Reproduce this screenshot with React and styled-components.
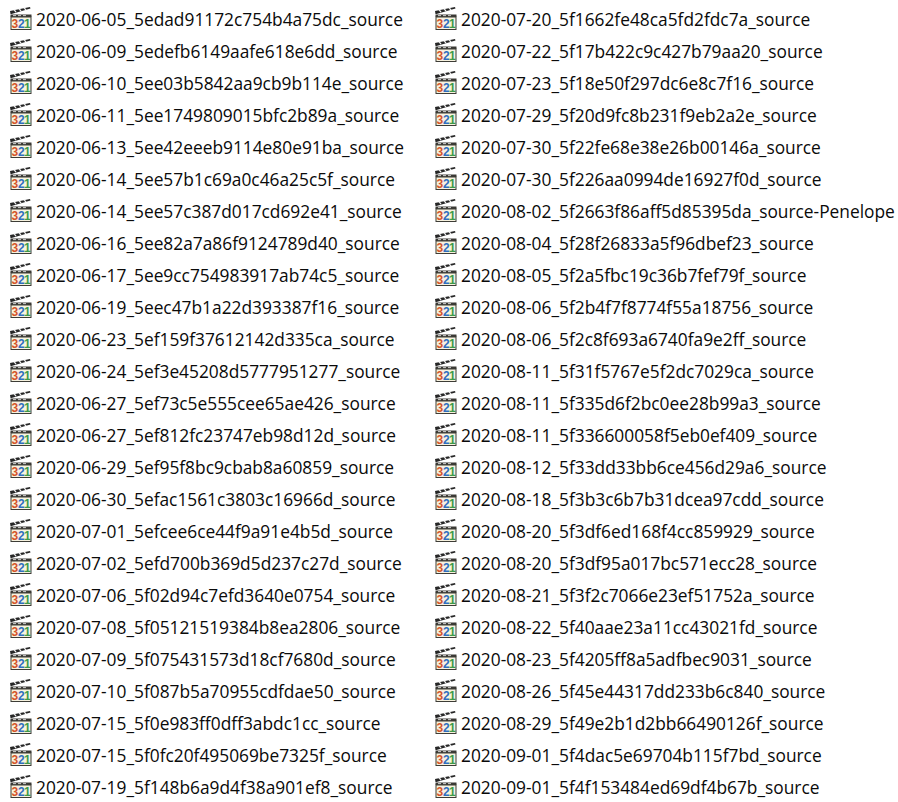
import React from 'react'
import styled, { createGlobalStyle } from 'styled-components'

const GlobalStyle = createGlobalStyle`
    html, body {
        margin:0;
        padding:0;
        background:#fff;
    }
`

const leftFiles = [
    '2020-06-05_5edad91172c754b4a75dc_source',
    '2020-06-09_5edefb6149aafe618e6dd_source',
    '2020-06-10_5ee03b5842aa9cb9b114e_source',
    '2020-06-11_5ee1749809015bfc2b89a_source',
    '2020-06-13_5ee42eeeb9114e80e91ba_source',
    '2020-06-14_5ee57b1c69a0c46a25c5f_source',
    '2020-06-14_5ee57c387d017cd692e41_source',
    '2020-06-16_5ee82a7a86f9124789d40_source',
    '2020-06-17_5ee9cc754983917ab74c5_source',
    '2020-06-19_5eec47b1a22d393387f16_source',
    '2020-06-23_5ef159f37612142d335ca_source',
    '2020-06-24_5ef3e45208d5777951277_source',
    '2020-06-27_5ef73c5e555cee65ae426_source',
    '2020-06-27_5ef812fc23747eb98d12d_source',
    '2020-06-29_5ef95f8bc9cbab8a60859_source',
    '2020-06-30_5efac1561c3803c16966d_source',
    '2020-07-01_5efcee6ce44f9a91e4b5d_source',
    '2020-07-02_5efd700b369d5d237c27d_source',
    '2020-07-06_5f02d94c7efd3640e0754_source',
    '2020-07-08_5f05121519384b8ea2806_source',
    '2020-07-09_5f075431573d18cf7680d_source',
    '2020-07-10_5f087b5a70955cdfdae50_source',
    '2020-07-15_5f0e983ff0dff3abdc1cc_source',
    '2020-07-15_5f0fc20f495069be7325f_source',
    '2020-07-19_5f148b6a9d4f38a901ef8_source',
]

const rightFiles = [
    '2020-07-20_5f1662fe48ca5fd2fdc7a_source',
    '2020-07-22_5f17b422c9c427b79aa20_source',
    '2020-07-23_5f18e50f297dc6e8c7f16_source',
    '2020-07-29_5f20d9fc8b231f9eb2a2e_source',
    '2020-07-30_5f22fe68e38e26b00146a_source',
    '2020-07-30_5f226aa0994de16927f0d_source',
    '2020-08-02_5f2663f86aff5d85395da_source-Penelope',
    '2020-08-04_5f28f26833a5f96dbef23_source',
    '2020-08-05_5f2a5fbc19c36b7fef79f_source',
    '2020-08-06_5f2b4f7f8774f55a18756_source',
    '2020-08-06_5f2c8f693a6740fa9e2ff_source',
    '2020-08-11_5f31f5767e5f2dc7029ca_source',
    '2020-08-11_5f335d6f2bc0ee28b99a3_source',
    '2020-08-11_5f336600058f5eb0ef409_source',
    '2020-08-12_5f33dd33bb6ce456d29a6_source',
    '2020-08-18_5f3b3c6b7b31dcea97cdd_source',
    '2020-08-20_5f3df6ed168f4cc859929_source',
    '2020-08-20_5f3df95a017bc571ecc28_source',
    '2020-08-21_5f3f2c7066e23ef51752a_source',
    '2020-08-22_5f40aae23a11cc43021fd_source',
    '2020-08-23_5f4205ff8a5adfbec9031_source',
    '2020-08-26_5f45e44317dd233b6c840_source',
    '2020-08-29_5f49e2b1d2bb66490126f_source',
    '2020-09-01_5f4dac5e69704b115f7bd_source',
    '2020-09-01_5f4f153484ed69df4b67b_source',
]

const Listing = styled.div`
    display:grid;
    grid-template-columns:425px 1fr;
    width:898px;
    height:802px;
    padding:3px 0 0 10px;
    box-sizing:border-box;
    overflow:hidden;
`
const Column = styled.div`
    display:flex;
    flex-direction:column;
`
const FileRow = styled.div`
    display:flex;
    align-items:center;
    gap:4px;
    height:32px;
    font-family:"Open Sans", sans-serif;
    font-size:17.33px;
    color:#0a0a0a;
    white-space:nowrap;
`
const IconSvg = styled.svg`
    flex:none;
`
const Digit = styled.text`
    font-family:"Liberation Sans", sans-serif;
    font-size:12px;
    font-weight:700;
    fill:${props => props.color};
`

const MediaIcon = () => (
    <IconSvg width="22" height="24" viewBox="0 0 22 24">
        <path d="M0 4 L20 0 L20.5 1.5 L1.5 7 L0.5 7 Z" fill="#262626" />
        <path d="M4 2.6 L6 5.2 M9 1.6 L11 4.2 M14 0.6 L16 3.2" stroke="#efefef" strokeWidth="1.3" />
        <path d="M0.5 7.5 H21.5 V10 H0.5 Z" fill="#3a3934" />
        <path d="M3 8.7 H6 M8 8.7 H11 M13 8.7 H16" stroke="#dcdcdc" strokeWidth="1" />
        <rect x="1" y="10" width="20" height="12.5" fill="#f7f2df" stroke="#3d3c36" />
        <Digit x="1.5" y="20.5" color="#d4552a">3</Digit>
        <Digit x="8" y="20.5" color="#2f6fc0">2</Digit>
        <Digit x="14" y="20.5" color="#3f9a4a">1</Digit>
    </IconSvg>
)

const FileColumn = ({ files }) => (
    <Column>
        {files.map(name => (
            <FileRow key={name}>
                <MediaIcon />
                {name}
            </FileRow>
        ))}
    </Column>
)

export default function App() {
    return (
        <>
            <GlobalStyle />
            <Listing>
                <FileColumn files={leftFiles} />
                <FileColumn files={rightFiles} />
            </Listing>
        </>
    )
}
